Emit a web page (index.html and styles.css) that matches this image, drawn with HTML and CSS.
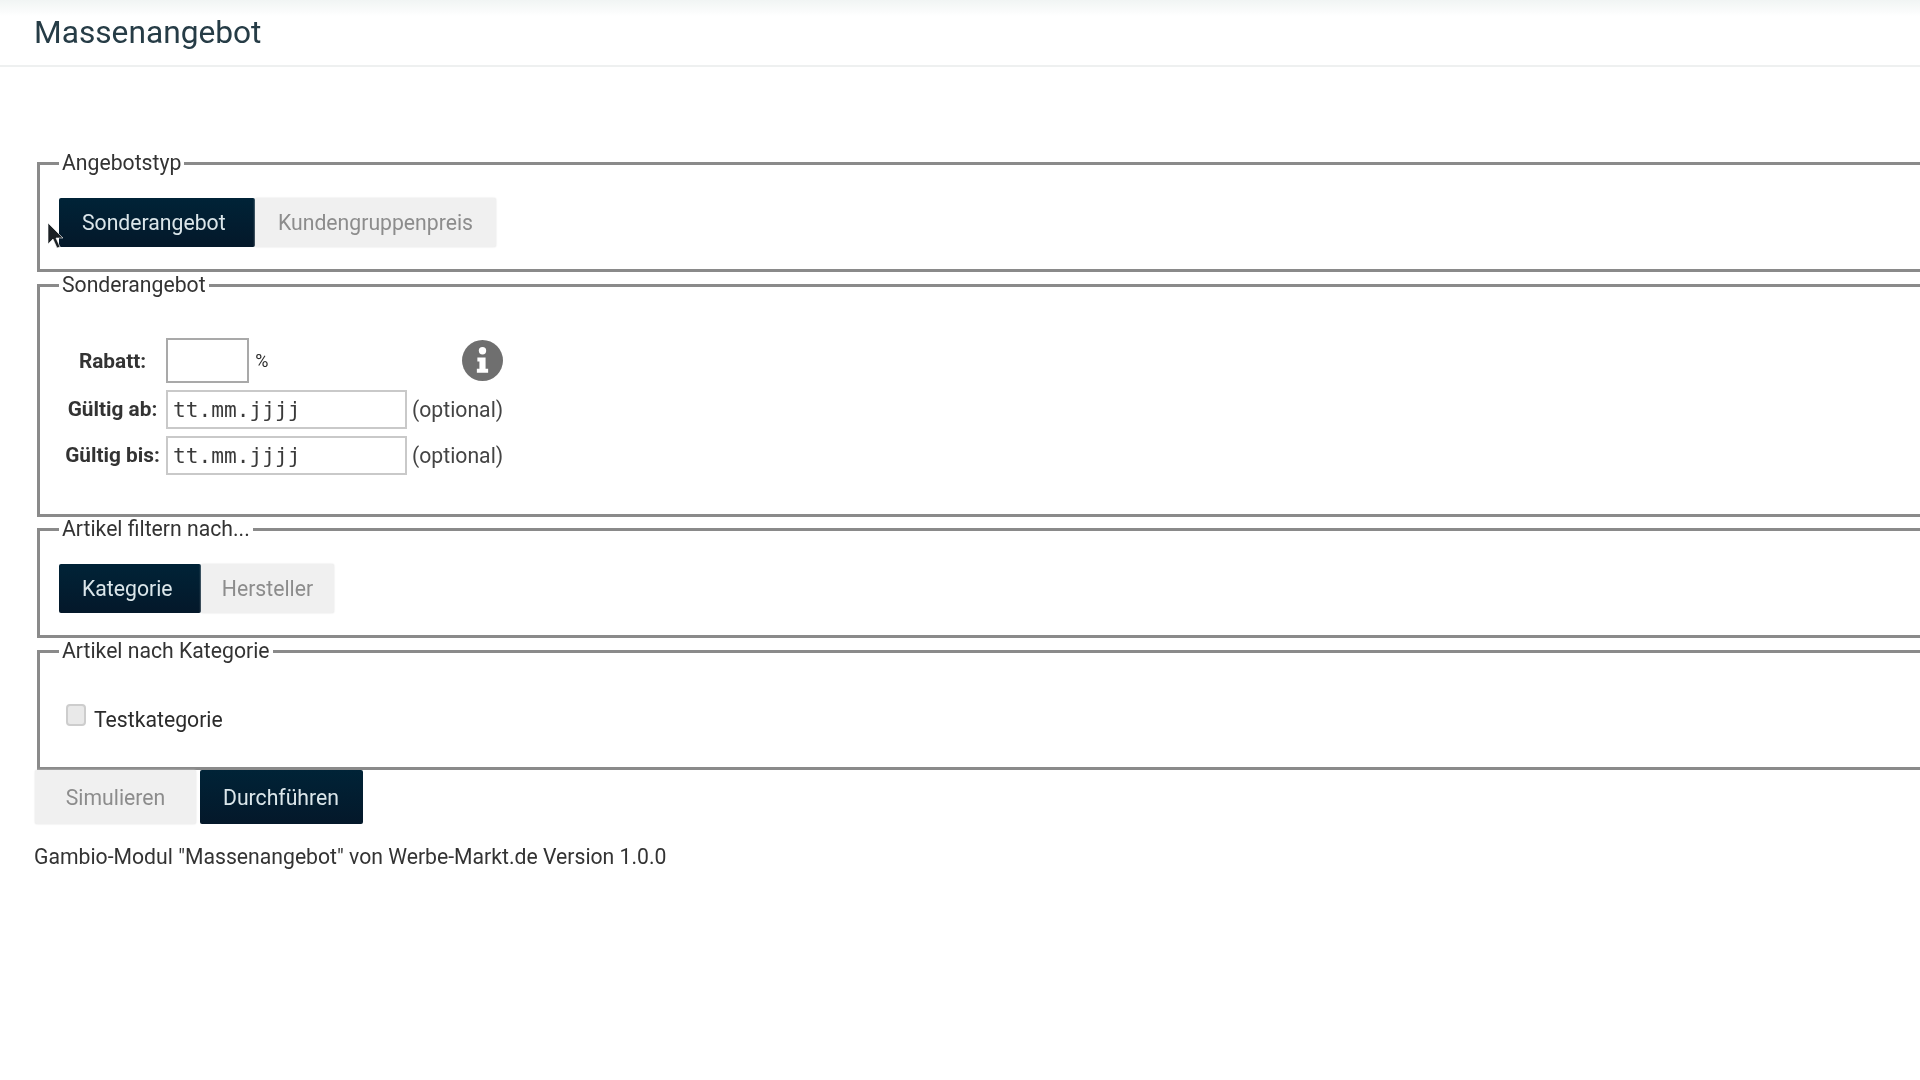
FILE: index.html
```html
<!DOCTYPE html>
<html lang="de">
<head>
<meta charset="utf-8">
<title>Massenangebot</title>
<link rel="stylesheet" href="styles.css">
</head>
<body>
<header class="page-header"><h1 class="page-title">Massenangebot</h1></header>
<main class="content">
  <form class="form">
    <fieldset class="group group-type">
      <legend>Angebotstyp</legend>
      <div class="toggle">
        <button type="button" class="btn btn-dark btn-first">Sonderangebot</button>
        <button type="button" class="btn btn-light btn-second">Kundengruppenpreis</button>
      </div>
    </fieldset>
    <fieldset class="group group-offer">
      <legend>Sonderangebot</legend>
      <table class="fields">
        <tr class="row-rabatt">
          <th>Rabatt:</th>
          <td><input class="input input-short" type="text"> <span class="unit">%</span></td>
          <td class="info-cell">
            <svg class="info" viewBox="0 0 40 40" width="41" height="41" aria-hidden="true">
              <circle cx="20" cy="20" r="20" fill="#6f6f6f"/>
              <circle cx="20" cy="10.5" r="3.6" fill="#fff"/>
              <path d="M15 17h8v11h2.5v4h-11v-4H17v-7h-2z" fill="#fff"/>
            </svg>
          </td>
        </tr>
        <tr>
          <th>Gültig ab:</th>
          <td colspan="2" class="date-cell"><input class="input input-date" type="text" placeholder="tt.mm.jjjj"><span class="hint">(optional)</span></td>
        </tr>
        <tr>
          <th>Gültig bis:</th>
          <td colspan="2" class="date-cell"><input class="input input-date" type="text" placeholder="tt.mm.jjjj"><span class="hint">(optional)</span></td>
        </tr>
      </table>
    </fieldset>
    <fieldset class="group group-filter">
      <legend>Artikel filtern nach...</legend>
      <div class="toggle">
        <button type="button" class="btn btn-dark btn-cat">Kategorie</button>
        <button type="button" class="btn btn-light btn-maker">Hersteller</button>
      </div>
    </fieldset>
    <fieldset class="group group-cat">
      <legend>Artikel nach Kategorie</legend>
      <label class="check"><span class="box"></span><span>Testkategorie</span></label>
    </fieldset>
    <div class="actions">
      <button type="button" class="btn btn-light btn-sim">Simulieren</button>
      <button type="button" class="btn btn-dark btn-run">Durchführen</button>
    </div>
    <p class="footer-note">Gambio-Modul "Massenangebot" von Werbe-Markt.de Version 1.0.0</p>
  </form>
</main>
<svg class="cursor" viewBox="0 0 18 28" width="18" height="28" aria-hidden="true">
  <path d="M1 1v21l5-5 4 9 3-1-4-9h7z" fill="#1c2125" stroke="#fff" stroke-width=".6"/>
</svg>
</body>
</html>
```
FILE: styles.css
```css
* { box-sizing: border-box; }
html, body { margin: 0; height: 100%; }
body {
  background: #fff;
  color: #2b2b2b;
  font-family: Roboto, "Liberation Sans", sans-serif;
  font-size: 21.2px;
  overflow: hidden;
  position: relative;
  filter: blur(.6px);
}
.page-header {
  height: 67px;
  padding: 15px 0 0 34px;
  border-bottom: 2px solid #eef0f0;
  background: linear-gradient(#f1f5f4 0, #fbfcfc 12px, #fff 16px);
}
.page-title {
  margin: 0;
  font-size: 31.7px;
  line-height: 36px;
  font-weight: 400;
  color: #263c46;
}
.content { padding: 85px 0 0 34px; }
.form { width: 2100px; }
.group {
  margin: 0 0 0 3px;
  padding: 0 0 0 19px;
  border: 3px solid #8a8a8a;
  min-width: 0;
}
.group legend {
  padding: 0 3px;
  font-size: 21.2px;
  line-height: 22px;
  color: #333;
}
.group-type { height: 120px; }
.group-offer { height: 243px; margin-top: 2px; }
.group-filter { height: 120px; margin-top: 1px; }
.group-cat { height: 130px; margin-top: 2px; }
.toggle { display: flex; margin-top: 24px; }
.btn {
  border: 0;
  padding: 0;
  font: inherit;
  font-size: 21.2px;
  height: 49px;
  border-radius: 2px;
}
.btn-dark {
  background: linear-gradient(#002337, #04182a);
  background-color: #001b2d;
  color: #dbe6ea;
  text-align: left;
  padding-left: 23px;
}
.btn-light {
  background: #f0f0f0;
  color: #8c8c8c;
  box-shadow: 0 0 2px #dcdcdc;
}
.btn-first { width: 196px; }
.btn-second { width: 241px; }
.btn-cat { width: 142px; }
.btn-maker { width: 133px; }
.fields {
  border-collapse: separate;
  border-spacing: 0;
  margin: 39px 0 0 0;
}
.fields th {
  width: 107px;
  padding: 0;
  font-weight: 700;
  text-align: center;
  white-space: nowrap;
  color: #333;
  font-size: 20.8px;
}
.fields td { padding: 0; white-space: nowrap; }
.row-rabatt th, .row-rabatt td { height: 51px; padding-bottom: 0; }
.date-cell { height: 46px; vertical-align: middle; }
.input {
  border: 2px solid #c9c9c9;
  background: #fff;
  padding: 0 5px;
  vertical-align: middle;
  outline: 0;
}
.input-short { width: 83px; height: 45px; border-color: #a9a9a9; }
.input-date {
  width: 241px;
  height: 39px;
  font-family: "DejaVu Sans Mono", "Liberation Mono", monospace;
  font-size: 21.2px;
}
.input-date::placeholder { color: #3a3a3a; opacity: 1; }
.unit { font-size: 18px; margin-left: 1px; vertical-align: middle; }
.hint { margin-left: 5px; color: #444; vertical-align: middle; }
.info-cell { text-align: right; vertical-align: middle; }
.info { display: block; margin-left: auto; }
.check { display: flex; align-items: flex-start; margin: 42px 0 0 7px; }
.box {
  width: 20px;
  height: 22px;
  margin: 0 8px 0 0;
  border: 2px solid #cdcdcd;
  border-radius: 4px;
  background: #e9e9e9;
}
.check span:last-child { margin-top: 5px; line-height: 22px; }
.actions { display: flex; gap: 4px; margin: 0 0 0 1px; }
.actions .btn { height: 54px; }
.btn-sim { width: 161px; }
.btn-run { width: 163px; padding-left: 23px; }
.footer-note { margin: 21px 0 0; line-height: 24px; color: #333; }
.cursor { position: absolute; left: 47px; top: 222px; }
```
